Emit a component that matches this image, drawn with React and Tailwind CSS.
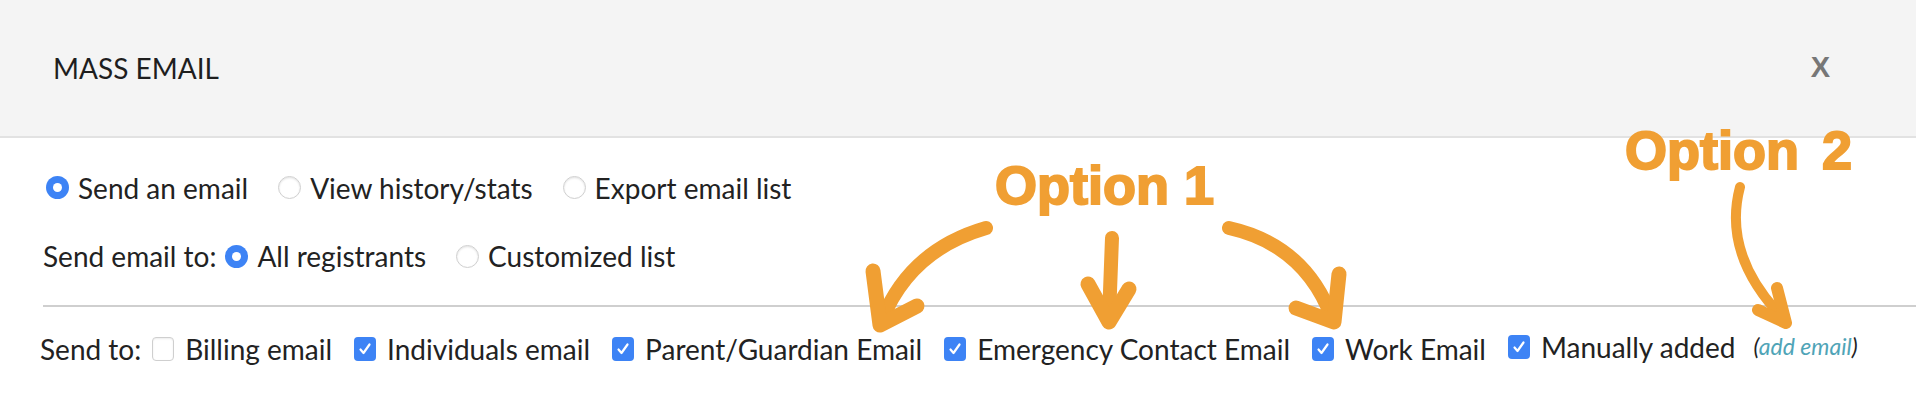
import React from 'react';

const font = { fontFamily: 'Lato, "Open Sans", sans-serif' };
const heavy = { fontFamily: '"Liberation Sans", Arial, sans-serif' };

function Radio({ checked }) {
  if (checked) {
    return (
      <span className="flex items-center justify-center w-[23px] h-[23px] rounded-full bg-[#3d83f5] shrink-0">
        <span className="w-[9px] h-[9px] rounded-full bg-white" />
      </span>
    );
  }
  return (
    <span className="w-[23px] h-[23px] rounded-full bg-white border border-[#d0d0d0] shadow-[inset_0_1px_2px_rgba(0,0,0,0.12)] shrink-0" />
  );
}

function Checkbox({ checked }) {
  if (checked) {
    return (
      <span className="flex items-center justify-center w-[22px] h-[24px] rounded-[4px] bg-[#3d83f5] shrink-0">
        <svg width="14" height="14" viewBox="0 0 14 14" fill="none">
          <path d="M2.5 7.5 L5.5 11 L11.5 2.5" stroke="white" strokeWidth="2.2" strokeLinecap="round" strokeLinejoin="round" />
        </svg>
      </span>
    );
  }
  return (
    <span className="w-[22px] h-[24px] rounded-[4px] bg-white border border-[#cfcfcf] shadow-[inset_0_1px_2px_rgba(0,0,0,0.08)] shrink-0" />
  );
}

function RadioItem({ checked, label }) {
  return (
    <label className="flex items-center gap-[9px]">
      <Radio checked={checked} />
      <span>{label}</span>
    </label>
  );
}

function CheckItem({ checked, label, children }) {
  return (
    <label className="flex items-center gap-[11px]">
      <Checkbox checked={checked} />
      <span>{label}</span>
      {children}
    </label>
  );
}

function Annotations() {
  const orange = '#f09f33';
  return (
    <svg className="absolute inset-0 pointer-events-none" width="1916" height="406" viewBox="0 0 1916 406" fill="none">
      <g stroke={orange} strokeLinecap="round" strokeLinejoin="round">
        <path d="M986 228 Q910 250 882 320" strokeWidth="14" />
        <path d="M873 271 L880 325 L917 306" strokeWidth="15" />
        <path d="M1112 238 L1109 318" strokeWidth="14" />
        <path d="M1088 284 L1109 322 L1129 289" strokeWidth="15" />
        <path d="M1229 228 Q1305 245 1332 318" strokeWidth="14" />
        <path d="M1339 274 L1334 322 L1296 308" strokeWidth="15" />
        <path d="M1740 187 Q1722 255 1783 318" strokeWidth="10" />
        <path d="M1777 288 L1786 323 L1758 310" strokeWidth="12" />
      </g>
    </svg>
  );
}

export default function App() {
  return (
    <div className="relative w-[1916px] h-[406px] bg-white overflow-hidden text-[#222]" style={font}>
      {/* header */}
      <div className="flex items-center justify-between h-[138px] bg-[#f4f4f4] border-b-2 border-[#e2e2e2] pl-[53px] pr-[86px]">
        <h1 className="text-[28px] text-[#1e1e1e]">MASS EMAIL</h1>
        <button className="text-[29px] font-bold text-[#777]" style={heavy}>X</button>
      </div>

      <div className="text-[28px]">
        <div className="flex items-center gap-[30px] pl-[46px] pt-[33px] h-[66px]">
          <RadioItem checked label="Send an email" />
          <RadioItem label="View history/stats" />
          <RadioItem label="Export email list" />
        </div>
        <div className="flex items-center gap-[30px] pl-[43px] pt-[36px] h-[68px]">
          <div className="flex items-center gap-[9px]">
            <span>Send email to:</span>
            <RadioItem checked label="All registrants" />
          </div>
          <RadioItem label="Customized list" />
        </div>

        <div className="ml-[43px] mt-[33px] border-t-2 border-[#cfcfcf]" />

        <div className="flex items-center gap-[22px] pl-[40px] pt-[21px]">
          <span className="-mr-[11px]">Send to:</span>
          <CheckItem label="Billing email" />
          <CheckItem checked label="Individuals email" />
          <CheckItem checked label="Parent/Guardian Email" />
          <CheckItem checked label="Emergency Contact Email" />
          <CheckItem checked label="Work Email" />
          <div className="-mt-[5px]">
            <CheckItem checked label="Manually added">
              <span className="ml-[7px] text-[23px] italic text-[#222]">
                (<a className="text-[#4fa4b7]">add email</a>)
              </span>
            </CheckItem>
          </div>
        </div>
      </div>

      <div className="absolute left-[995px] top-[158px] text-[54px] font-black leading-none text-[#f09f33] [-webkit-text-stroke:2px_#f09f33]" style={heavy}>
        Option 1
      </div>
      <div className="absolute left-[1625px] top-[123px] text-[54px] font-black leading-none text-[#f09f33] [-webkit-text-stroke:2px_#f09f33] [word-spacing:8px]" style={heavy}>
        Option 2
      </div>
      <Annotations />
    </div>
  );
}
